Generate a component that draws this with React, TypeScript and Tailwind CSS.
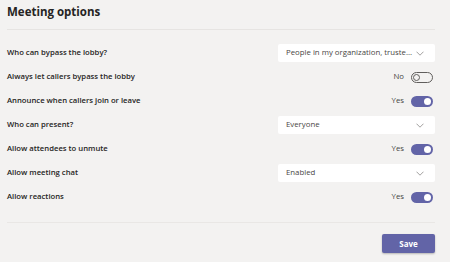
import React from "react";

type Row =
  | { label: string; kind: "select"; value: string }
  | { label: string; kind: "toggle"; on: boolean };

const rows: Row[] = [
  { label: "Who can bypass the lobby?", kind: "select", value: "People in my organization, truste..." },
  { label: "Always let callers bypass the lobby", kind: "toggle", on: false },
  { label: "Announce when callers join or leave", kind: "toggle", on: true },
  { label: "Who can present?", kind: "select", value: "Everyone" },
  { label: "Allow attendees to unmute", kind: "toggle", on: true },
  { label: "Allow meeting chat", kind: "select", value: "Enabled" },
  { label: "Allow reactions", kind: "toggle", on: true },
];

function Chevron() {
  return (
    <svg width="8" height="5" viewBox="0 0 8 5" fill="none">
      <path d="M0.5 0.7L4 4.2L7.5 0.7" stroke="#8a8886" strokeWidth="0.8" />
    </svg>
  );
}

function Select({ value }: { value: string }) {
  return (
    <div className="w-[157px] h-[18px] shrink-0 bg-white rounded-[2px] flex items-center justify-between pl-[8px] pr-[11px]">
      <span className="text-[7.8px] text-[#484644] whitespace-nowrap">{value}</span>
      <Chevron />
    </div>
  );
}

function Toggle({ on }: { on: boolean }) {
  return (
    <div className="flex items-center gap-[7px] pr-[2px]">
      <span className="text-[7.8px] text-[#484644]">{on ? "Yes" : "No"}</span>
      {on ? (
        <div className="w-[22px] h-[11px] rounded-full bg-[#6264a7] flex items-center justify-end pr-[2px]">
          <div className="w-[7px] h-[7px] rounded-full bg-white" />
        </div>
      ) : (
        <div className="w-[22px] h-[11px] rounded-full border border-[#605e5c] flex items-center pl-[1px]">
          <div className="w-[7px] h-[7px] rounded-full border border-[#605e5c]" />
        </div>
      )}
    </div>
  );
}

export default function App() {
  return (
    <div
      className="w-[450px] h-[262px] bg-[#f3f2f1] pl-[7px] pr-[15px] overflow-hidden"
      style={{ fontFamily: '"Open Sans", "Noto Sans", sans-serif' }}
    >
      {/* header */}
      <div className="h-[30px] border-b border-[#e6e4e2] pt-[2px]">
        <h1 className="text-[11.5px] font-bold text-[#252423] leading-[20px]">Meeting options</h1>
      </div>

      {/* options */}
      <div className="pt-[11px] pb-[13px] border-b border-[#e9e7e5]">
        {rows.map((r) => (
          <div key={r.label} className="h-[24px] flex items-center justify-between">
            <span className="text-[7.7px] font-semibold text-[#252423]">{r.label}</span>
            {r.kind === "select" ? <Select value={r.value} /> : <Toggle on={r.on} />}
          </div>
        ))}
      </div>

      {/* footer */}
      <div className="flex justify-end pt-[11px]">
        <button className="w-[53px] h-[19px] bg-[#6264a7] text-white text-[8px] font-bold rounded-[2px] shadow-[0_1px_2px_rgba(0,0,0,0.25)]">
          Save
        </button>
      </div>
    </div>
  );
}
